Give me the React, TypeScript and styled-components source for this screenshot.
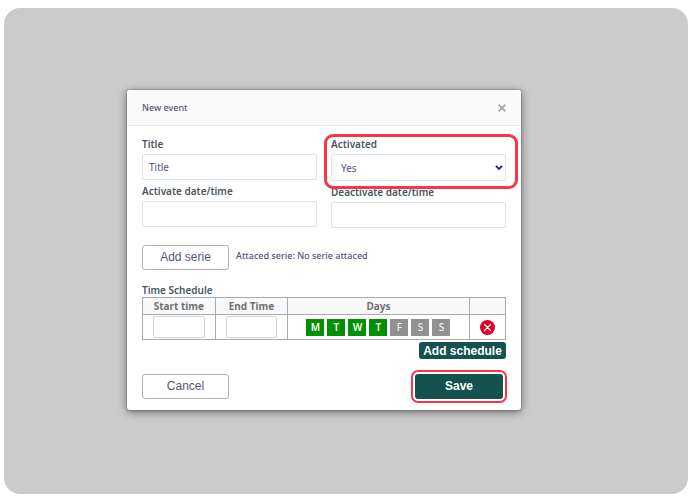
import React from "react";
import styled, { createGlobalStyle } from "styled-components";

const GlobalStyle = createGlobalStyle`
  *, *::before, *::after { box-sizing: border-box; }
  body {
    margin: 0;
    background: #fff;
    color: #53567a;
    font-family: "Noto Sans", "Open Sans", sans-serif;
    font-size: 10px;
    line-height: 14px;
  }
  button, input, select { font: inherit; color: inherit; margin: 0; }
`;

const Backdrop = styled.main`
  margin: 8px 4px 5px 4px;
  min-height: calc(100vh - 13px);
  padding: 82px 123px;
  border-radius: 16px;
  background: #cbcbcb;
`;

const Dialog = styled.section`
  width: 100%;
  max-width: 394px;
  border-radius: 3px;
  background: #fff;
  box-shadow: 0 2px 8px rgba(0, 0, 0, 0.5), 0 0 2px rgba(0, 0, 0, 0.45);
`;

const Header = styled.header`
  display: flex;
  align-items: center;
  justify-content: space-between;
  height: 36px;
  padding: 0 15px;
  border-bottom: 1px solid #e6e8ea;
  border-radius: 3px 3px 0 0;
  background: #fafafa;
`;

const Heading = styled.h1`
  margin: 0;
  font-size: 9px;
  font-weight: 500;
`;

const CloseButton = styled.button`
  display: flex;
  padding: 0;
  border: 0;
  background: none;
  color: #a3a3a3;
`;

const Form = styled.form`
  padding: 11px 15px 11px;
`;

const Fields = styled.div`
  display: grid;
  grid-template-columns: 1fr 1fr;
  column-gap: 14px;
`;

const Column = styled.div`
  display: flex;
  flex-direction: column;
  gap: 4px;
`;

const Field = styled.div`
  position: relative;
  display: flex;
  flex-direction: column;
  gap: 3px;
`;

const Label = styled.label`
  color: #4a565c;
  font-size: 10px;
  font-weight: 600;
`;

const TextInput = styled.input`
  width: 100%;
  height: 26px;
  padding: 0 6px;
  border: 1px solid #dfe3e7;
  border-radius: 2px;
  background: #fff;
`;

const SelectBox = styled.div`
  position: relative;
`;

const Select = styled.select`
  display: block;
  width: 100%;
  height: 27px;
  padding: 0 9px;
  border: 1px solid #dfe3e7;
  border-radius: 2px;
  background: #fff;
  appearance: none;
`;

const Chevron = styled.svg`
  position: absolute;
  top: 11px;
  right: 3px;
  pointer-events: none;
`;

const FieldHighlight = styled.span`
  position: absolute;
  z-index: 1;
  inset: -3px -12px -8px -7px;
  border: 3px solid #fa3545;
  border-radius: 9px;
  pointer-events: none;
`;

const SerieRow = styled.div`
  display: flex;
  align-items: center;
  gap: 7px;
  margin-top: 17px;
`;

const OutlineButton = styled.button`
  width: 87px;
  height: 25px;
  padding: 0 0 1px;
  border: 1px solid #b0b0b0;
  border-radius: 3px;
  background: #fff;
  font-family: "Liberation Sans", Arial, sans-serif;
  font-size: 12px;
`;

const SerieText = styled.span`
  padding-bottom: 3px;
  font-size: 9px;
  font-weight: 500;
`;

const Table = styled.table`
  width: 100%;
  border-collapse: collapse;
  table-layout: fixed;
  border: 1px solid #aaa;
`;

const Caption = styled.caption`
  margin-top: 13px;
  color: #4a565c;
  font-weight: 600;
  text-align: left;
`;

const HeadCell = styled.th<{ $width?: string }>`
  width: ${({ $width }) => $width ?? "auto"};
  height: 17px;
  padding: 0;
  border: 1px solid #aaa;
  background: #f8f9fb;
  color: #707070;
  font-weight: 700;
`;

const Cell = styled.td`
  height: 25px;
  padding: 0 10px;
  border: 1px solid #aaa;
`;

const TimeInput = styled.input`
  display: block;
  width: 100%;
  height: 22px;
  padding: 0 4px;
  border: 1px solid #d4d4d4;
  border-radius: 2px;
`;

const Days = styled.div`
  display: flex;
  justify-content: center;
  gap: 3px;
`;

const Day = styled.button<{ $on: boolean }>`
  width: 18px;
  height: 17px;
  padding: 0;
  border: 0;
  background: ${({ $on }) => ($on ? "#009000" : "#919191")};
  color: ${({ $on }) => ($on ? "#fff" : "#eee")};
  font-weight: ${({ $on }) => ($on ? 600 : 500)};
`;

const RemoveButton = styled.button`
  display: block;
  width: 15px;
  height: 15px;
  padding: 0;
  border: 0;
  background: none;
`;

const Actions = styled.div`
  display: flex;
  justify-content: flex-end;
  margin-top: 2px;
`;

const SolidButton = styled.button`
  padding: 0;
  border: 0;
  border-radius: 3px;
  background: #145250;
  color: #fff;
  font-family: "Liberation Sans", Arial, sans-serif;
  font-size: 12px;
  font-weight: 700;
`;

const AddScheduleButton = styled(SolidButton)`
  width: 87px;
  height: 17px;
`;

const SaveButton = styled(SolidButton)`
  width: 88px;
  height: 25px;
  margin-right: 3px;
  padding-bottom: 1px;
  outline: 2px solid #fa3545;
  outline-offset: 2px;
`;

const Footer = styled.footer`
  display: flex;
  justify-content: space-between;
  margin-top: 15px;
`;

const WEEK = [
  { name: "Monday", on: true },
  { name: "Tuesday", on: true },
  { name: "Wednesday", on: true },
  { name: "Thursday", on: true },
  { name: "Friday", on: false },
  { name: "Saturday", on: false },
  { name: "Sunday", on: false },
];

export default function App() {
  const [days, setDays] = React.useState(WEEK);
  const toggle = (name: string) =>
    setDays((list) => list.map((d) => (d.name === name ? { ...d, on: !d.on } : d)));

  return (
    <>
      <GlobalStyle />
      <Backdrop>
        <Dialog role="dialog" aria-labelledby="heading">
          <Header>
            <Heading id="heading">New event</Heading>
            <CloseButton type="button" aria-label="Close">
              <svg width="8" height="8" viewBox="0 0 8 8" stroke="currentColor" strokeWidth="1.8">
                <path d="M.7.7l6.6 6.6M7.3.7L.7 7.3" />
              </svg>
            </CloseButton>
          </Header>
          <Form onSubmit={(e) => e.preventDefault()}>
            <Fields>
              <Column>
                <Field>
                  <Label htmlFor="title">Title</Label>
                  <TextInput id="title" defaultValue="Title" />
                </Field>
                <Field>
                  <Label htmlFor="activate">Activate date/time</Label>
                  <TextInput id="activate" />
                </Field>
              </Column>
              <Column>
                <Field>
                  <Label htmlFor="activated">Activated</Label>
                  <SelectBox>
                    <Select id="activated" defaultValue="Yes">
                      <option>Yes</option>
                      <option>No</option>
                    </Select>
                    <Chevron width="8" height="6" viewBox="0 0 8 6" fill="none" stroke="#2b2f52" strokeWidth="1.8">
                      <path d="M1 1l3 3l3-3" />
                    </Chevron>
                  </SelectBox>
                  <FieldHighlight />
                </Field>
                <Field>
                  <Label htmlFor="deactivate">Deactivate date/time</Label>
                  <TextInput id="deactivate" />
                </Field>
              </Column>
            </Fields>
            <SerieRow>
              <OutlineButton type="button">Add serie</OutlineButton>
              <SerieText>Attaced serie: No serie attaced</SerieText>
            </SerieRow>
            <Table>
              <Caption>Time Schedule</Caption>
              <thead>
                <tr>
                  <HeadCell $width="20%">Start time</HeadCell>
                  <HeadCell $width="20%">End Time</HeadCell>
                  <HeadCell>Days</HeadCell>
                  <HeadCell $width="10%" aria-label="Remove" />
                </tr>
              </thead>
              <tbody>
                <tr>
                  <Cell><TimeInput aria-label="Start time" /></Cell>
                  <Cell><TimeInput aria-label="End time" /></Cell>
                  <Cell>
                    <Days>
                      {days.map((d) => (
                        <Day
                          key={d.name}
                          type="button"
                          $on={d.on}
                          aria-label={d.name}
                          aria-pressed={d.on}
                          onClick={() => toggle(d.name)}
                        >
                          {d.name[0]}
                        </Day>
                      ))}
                    </Days>
                  </Cell>
                  <Cell>
                    <RemoveButton type="button" aria-label="Remove schedule">
                      <svg width="15" height="15" viewBox="0 0 15 15" fill="none" display="block">
                        <circle cx="7.5" cy="7.5" r="7.5" fill="#dc0028" />
                        <path d="M4.5 4.5l6 6M10.5 4.5l-6 6" stroke="#fff" strokeWidth="1.2" strokeLinecap="round" />
                      </svg>
                    </RemoveButton>
                  </Cell>
                </tr>
              </tbody>
            </Table>
            <Actions>
              <AddScheduleButton type="button">Add schedule</AddScheduleButton>
            </Actions>
            <Footer>
              <OutlineButton type="button">Cancel</OutlineButton>
              <SaveButton type="submit">Save</SaveButton>
            </Footer>
          </Form>
        </Dialog>
      </Backdrop>
    </>
  );
}
